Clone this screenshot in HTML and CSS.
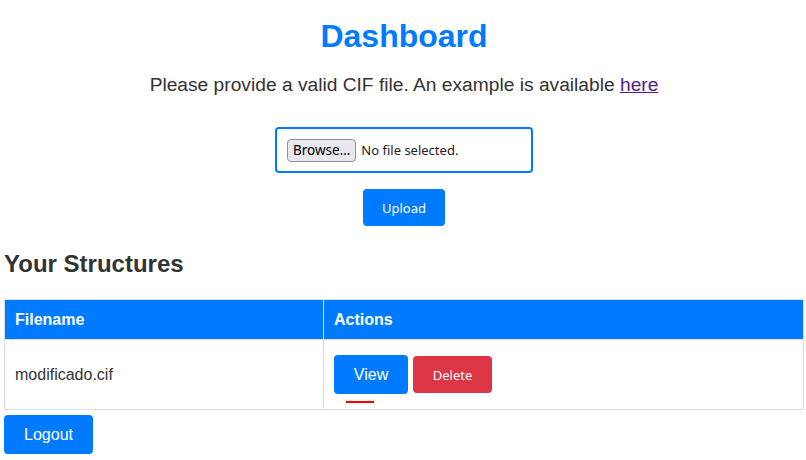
FILE: index.html
```html
<!DOCTYPE html>
<html lang="en">
<head>
<meta charset="utf-8">
<title>Dashboard</title>
<link rel="stylesheet" href="styles.css">
</head>
<body>
<div class="page">
  <h1 class="title">Dashboard</h1>
  <p class="intro">Please provide a valid CIF file. An example is available <a href="#" class="link">here</a></p>
  <form class="upload-form">
    <div class="file-box">
      <span class="browse">Browse…</span>
      <span class="file-status">No file selected.</span>
    </div>
    <button type="button" class="btn btn-upload">Upload</button>
  </form>
  <h2 class="section-title">Your Structures</h2>
  <table class="structures">
    <thead>
      <tr><th class="col-name">Filename</th><th>Actions</th></tr>
    </thead>
    <tbody>
      <tr>
        <td>modificado.cif</td>
        <td>
          <div class="actions">
            <button type="button" class="btn btn-view">View</button>
            <button type="button" class="btn btn-delete">Delete</button>
          </div>
        </td>
      </tr>
    </tbody>
  </table>
  <button type="button" class="btn btn-logout">Logout</button>
</div>
</body>
</html>
```
FILE: styles.css
```css
html, body {
  margin: 0;
  padding: 0;
  background: #fff;
}
body {
  font-family: "Liberation Sans", Arial, sans-serif;
  color: #333;
}
.page {
  padding: 0 2px 0 4px;
}
.title {
  margin: 0;
  padding-top: 16px;
  text-align: center;
  color: #007bff;
  font-size: 32px;
  line-height: 40px;
  font-weight: bold;
}
.intro {
  margin: 0;
  padding-top: 18px;
  text-align: center;
  font-size: 19.2px;
  line-height: 22px;
  color: #333;
}
.link {
  color: #551a8b;
  text-decoration: underline;
}
.upload-form {
  display: flex;
  flex-direction: column;
  align-items: center;
  padding-top: 31px;
}
.file-box {
  box-sizing: border-box;
  width: 258px;
  height: 46px;
  border: 2px solid #007bff;
  border-radius: 4px;
  padding: 10px;
  display: flex;
  align-items: center;
  gap: 5px;
  font-family: "Noto Sans", "Open Sans", sans-serif;
  font-size: 13px;
}
.browse {
  box-sizing: border-box;
  height: 23px;
  padding: 0 5px;
  display: flex;
  align-items: center;
  background: #e9e9ed;
  border: 1px solid #8f8f9d;
  border-radius: 4px;
  color: #000;
  font-size: 13.5px;
}
.file-status {
  color: #222;
}
.btn {
  border: none;
  border-radius: 4px;
  background: #007bff;
  color: #fff;
  cursor: pointer;
  padding: 0;
}
.btn-upload {
  margin-top: 16px;
  width: 82px;
  height: 37px;
  font-family: "Noto Sans", "Open Sans", sans-serif;
  font-size: 13px;
}
.section-title {
  margin: 0;
  padding-top: 24px;
  font-size: 24px;
  line-height: 28px;
  font-weight: bold;
  color: #333;
}
.structures {
  margin-top: 21px;
  width: 800px;
  border-collapse: collapse;
}
.structures th,
.structures td {
  border: 1px solid #ddd;
  text-align: left;
  padding: 0 10px;
  font-size: 16px;
}
.structures th {
  background: #007bff;
  color: #fff;
  font-weight: bold;
  height: 39px;
}
.col-name {
  width: 298px;
}
.structures td {
  height: 69px;
  color: #333;
}
.actions {
  display: flex;
  align-items: center;
  gap: 5px;
}
.btn-view {
  position: relative;
  width: 74px;
  height: 39px;
  font-family: "Liberation Sans", Arial, sans-serif;
  font-size: 16px;
}
.btn-view::after {
  content: "";
  position: absolute;
  left: 12px;
  top: 46px;
  width: 28px;
  height: 2px;
  background: #f00;
}
.btn-delete {
  width: 79px;
  height: 37px;
  background: #dc3545;
  font-family: "Noto Sans", "Open Sans", sans-serif;
  font-size: 13px;
}
.btn-logout {
  margin-top: 5px;
  width: 89px;
  height: 39px;
  font-family: "Liberation Sans", Arial, sans-serif;
  font-size: 16px;
}
```
